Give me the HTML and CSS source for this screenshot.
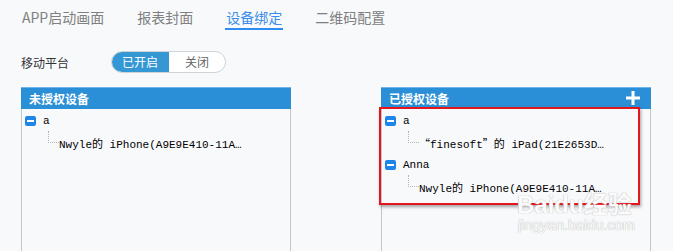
FILE: index.html
```html
<!DOCTYPE html>
<html lang="zh">
<head>
<meta charset="utf-8">
<link rel="stylesheet" href="styles.css">
</head>
<body>
<div class="page">
  <nav class="tabs">
    <span class="tab">APP启动画面</span>
    <span class="tab">报表封面</span>
    <span class="tab active">设备绑定</span>
    <span class="tab">二维码配置</span>
  </nav>
  <div class="platform">
    <span class="label">移动平台</span>
    <div class="toggle">
      <span class="seg on">已开启</span>
      <span class="seg off">关闭</span>
    </div>
  </div>
  <div class="panels">
    <section class="panel">
      <header class="panel-head"><span>未授权设备</span></header>
      <div class="tree">
        <div class="node"><i class="minus"></i><span class="name">a</span></div>
        <div class="leaf"><i class="branch"></i><span class="dev">Nwyle的 iPhone(A9E9E410-11A…</span></div>
      </div>
    </section>
    <section class="panel">
      <header class="panel-head"><span>已授权设备</span>
        <svg class="plus" width="16" height="16" viewBox="0 0 16 16"><path d="M8 1v14M1 8h14" stroke="#fff" stroke-width="3" fill="none"/></svg>
      </header>
      <div class="tree">
        <div class="node"><i class="minus"></i><span class="name">a</span></div>
        <div class="leaf"><i class="branch"></i><span class="dev"><span class="q">“</span>finesoft<span class="q">”</span>的 iPad(21E2653D…</span></div>
        <div class="node"><i class="minus"></i><span class="name">Anna</span></div>
        <div class="leaf"><i class="branch"></i><span class="dev">Nwyle的 iPhone(A9E9E410-11A…</span></div>
      </div>
      <div class="highlight"></div>
      <div class="watermark"><span class="wm1">Baidu经验</span><span class="wm2">jingyan.baidu.com</span></div>
    </section>
  </div>
</div>
</body>
</html>
```
FILE: styles.css
```css
html, body {
  margin: 0;
  padding: 0;
  background: #f7f9fb;
  overflow: hidden;
}
.page {
  width: 673px;
  height: 251px;
  overflow: hidden;
  font-family: "Noto Sans CJK SC", "Noto Sans", sans-serif;
}
.tabs {
  display: flex;
  gap: 33px;
  padding-left: 22px;
  height: 31px;
}
.tab {
  font-size: 14px;
  line-height: 20px;
  padding-top: 7px;
  color: #808080;
  box-sizing: border-box;
  height: 30px;
}
.tab.active {
  color: #3b8ee8;
  border-bottom: 2px solid #2d8cf0;
  padding: 7px 1px 0;
  margin: 0 -1px;
}
.platform {
  display: flex;
  align-items: center;
  padding-left: 21px;
  margin-top: 20px;
  height: 22px;
}
.label {
  width: 90px;
  font-size: 12px;
  color: #333;
}
.toggle {
  display: flex;
  height: 22px;
  width: 115px;
  box-sizing: border-box;
  border: 1px solid #cfd3d7;
  border-radius: 11px;
  overflow: hidden;
  background: #fff;
}
.seg {
  font-size: 12px;
  line-height: 20px;
  text-align: center;
}
.seg.on {
  width: 58px;
  background: #3597d4;
  color: #fff;
  margin: -1px 0 -1px -1px;
  line-height: 22px;
}
.seg.off {
  flex: 1;
  color: #666;
}
.panels {
  display: flex;
  gap: 90px;
  padding-left: 21px;
  margin-top: 14px;
}
.panel {
  position: relative;
  width: 270px;
  height: 170px;
  box-sizing: border-box;
  border: 1px solid #c3c7cb;
  border-top: 0;
  border-bottom: 0;
  background: #f8f9fb;
}
.panel-head {
  height: 22px;
  margin: 0 -1px;
  background: #2b8fd7;
  border-top: 1px solid #6fb4e8;
  box-sizing: border-box;
  display: flex;
  align-items: center;
  justify-content: space-between;
  padding: 0 10px 0 8px;
  color: #fff;
  font-weight: bold;
  font-size: 12px;
}
.plus {
  display: block;
  margin-top: -2px;
}
.tree {
  padding: 1px 0 0 3px;
}
.node, .leaf {
  display: flex;
  align-items: center;
  height: 22px;
}
.minus {
  flex: none;
  width: 11px;
  height: 10px;
  border-radius: 2px;
  background: #1d86e8;
  position: relative;
  margin-right: 7px;
}
.minus::after {
  content: "";
  position: absolute;
  left: 2px;
  right: 2px;
  top: 4px;
  height: 2px;
  background: #fff;
}
.name, .dev {
  font-family: "Liberation Mono", "Noto Sans CJK SC", monospace;
  font-size: 11px;
  color: #000;
  white-space: nowrap;
}
.q {
  font-family: "Noto Sans CJK SC", sans-serif;
}
.leaf {
  padding-left: 23px;
}
.branch {
  flex: none;
  width: 11px;
  height: 12px;
  margin-top: -12px;
  border-left: 1px dotted #b5b5b5;
  border-bottom: 1px dotted #b5b5b5;
  box-sizing: border-box;
  margin-right: 0;
}
.highlight {
  position: absolute;
  left: -3px;
  top: 20px;
  width: 261px;
  height: 98px;
  box-sizing: border-box;
  border: 2px solid #e3161d;
  box-shadow: 1px 2px 3px rgba(0,0,0,0.35);
}
.watermark {
  position: absolute;
  left: 135px;
  top: 107px;
  display: flex;
  flex-direction: column;
  color: #fbfbfb;
  text-shadow: 0 0 1px #bdbdbd, 0 0 1px #bdbdbd;
  line-height: 1;
}
.wm1 {
  font-family: "Liberation Sans", "Noto Sans CJK SC", sans-serif;
  font-weight: bold;
  font-size: 24px;
  line-height: 22px;
}
.wm2 {
  font-family: "Liberation Sans", sans-serif;
  font-size: 14.5px;
  margin-top: 2px;
  margin-left: 1px;
}
```
